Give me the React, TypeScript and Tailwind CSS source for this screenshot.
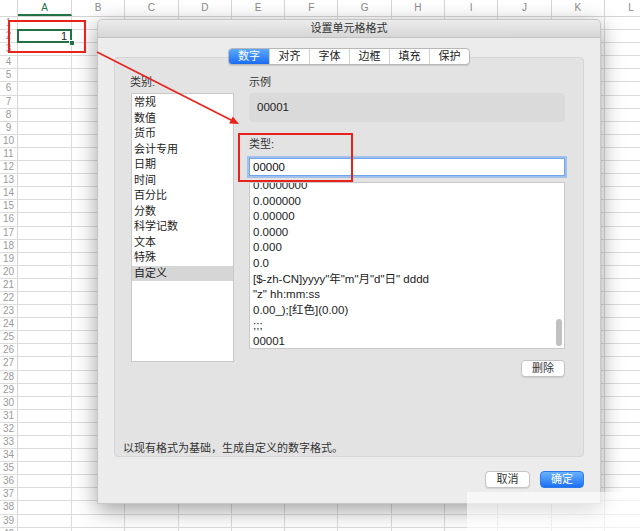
import React from 'react';

const cols = ['A', 'B', 'C', 'D', 'E', 'F', 'G', 'H', 'I', 'J', 'K', 'L'];
const rows = Array.from({ length: 40 }, (_, i) => i + 1);

const categories = ['常规', '数值', '货币', '会计专用', '日期', '时间', '百分比', '分数', '科学记数', '文本', '特殊', '自定义'];
const formats = [
  '0.0000000',
  '0.000000',
  '0.00000',
  '0.0000',
  '0.000',
  '0.0',
  '[$-zh-CN]yyyy"年"m"月"d"日" dddd',
  '"z" hh:mm:ss',
  '0.00_);[红色](0.00)',
  ';;;',
  '00001',
];
const tabs = ['数字', '对齐', '字体', '边框', '填充', '保护'];

function Sheet() {
  return (
    <div className="flex flex-col">
      {/* column header */}
      <div className="flex h-[17px] border-b border-[#d6d6d6] bg-white">
        <div className="w-[18px] shrink-0 border-r border-[#d6d6d6]" />
        {cols.map((c) => (
          <div
            key={c}
            className={
              c === 'A'
                ? 'w-[54px] shrink-0 border-r border-[#d6d6d6] border-b-2 border-b-[#217346] text-center text-[10px] leading-[16px] text-[#217346]'
                : 'w-[53.3px] shrink-0 border-r border-[#d6d6d6] text-center text-[10px] leading-[16px] text-[#8a8a8a]'
            }
          >
            {c}
          </div>
        ))}
      </div>
      {rows.map((r) => (
        <div key={r} className="flex h-[13.1px] border-b border-[#dcdcdc]">
          <div className="w-[18px] shrink-0 border-r border-[#d6d6d6] text-center text-[10px] leading-[12px] text-[#9a9a9a]">{r}</div>
          {cols.map((c) =>
            c === 'A' && r === 2 ? (
              <div key={c} className="relative w-[54px] shrink-0 border-r border-[#dcdcdc] text-right text-[11px] leading-[12px] pr-[4px]">
                <div className="absolute -inset-[1px] border-2 border-[#217346]" />
                <div className="absolute right-[-4px] bottom-[-4px] w-[6px] h-[6px] bg-[#217346] border border-white" />
                1
              </div>
            ) : (
              <div
                key={c}
                className={c === 'A' ? 'w-[54px] shrink-0 border-r border-[#dcdcdc]' : 'w-[53.3px] shrink-0 border-r border-[#dcdcdc]'}
              />
            )
          )}
        </div>
      ))}
    </div>
  );
}

function FormatDialog() {
  return (
    <div className="absolute left-[97px] top-[19px] w-[504px] h-[485px] flex flex-col bg-[#ececec] border border-[#c6c6c6] rounded-t-[5px] shadow-[0_6px_22px_rgba(0,0,0,0.38)]">
      {/* title bar */}
      <div className="h-[18px] rounded-t-[5px] bg-gradient-to-b from-[#ececec] to-[#d6d6d6] border-b border-[#c2c2c2] text-center text-[11px] leading-[17px] text-[#333]">
        设置单元格格式
      </div>

      {/* tabs */}
      <div className="relative z-10 mt-[10px] flex justify-center">
        <div className="flex rounded-[4px] border border-[#b8b8b8] bg-white shadow-[0_1px_1px_rgba(0,0,0,0.12)] overflow-hidden">
          {tabs.map((t, i) => (
            <div
              key={t}
              className={
                i === 0
                  ? 'w-[40px] h-[15px] text-center text-[11px] leading-[15px] text-white bg-gradient-to-b from-[#5ba8fd] to-[#1a6cf1]'
                  : 'w-[40px] h-[15px] text-center text-[11px] leading-[15px] text-[#222] border-l border-[#d2d2d2]'
              }
            >
              {t}
            </div>
          ))}
        </div>
      </div>

      {/* panel */}
      <div className="mx-[16px] mt-[-8px] h-[400px] flex flex-col bg-[#e3e3e3] border border-[#d5d5d5] rounded-[4px]">
        <div className="flex gap-[15px] pl-[16px] pt-[16px]">
          {/* category */}
          <div className="w-[103px] flex flex-col">
            <div className="h-[16px] text-[11px] leading-[16px] text-[#333] -ml-[1px]">类别:</div>
            <div className="mt-[3px] h-[269px] bg-white border border-[#c9c9c9] pt-[1px]">
              {categories.map((c) => (
                <div
                  key={c}
                  className={
                    c === '自定义'
                      ? 'h-[15.5px] pl-[2px] text-[11px] leading-[15.5px] text-[#222] bg-[#d6d6d6]'
                      : 'h-[15.5px] pl-[2px] text-[11px] leading-[15.5px] text-[#222]'
                  }
                >
                  {c}
                </div>
              ))}
            </div>
          </div>

          {/* sample / type */}
          <div className="w-[316px] flex flex-col">
            <div className="h-[16px] text-[11px] leading-[16px] text-[#333]">示例</div>
            <div className="mt-[3px] h-[29px] rounded-[4px] bg-[#dadada] pl-[8px] text-[11.5px] leading-[29px] text-[#222]">00001</div>
            <div className="mt-[14px] h-[16px] text-[11px] leading-[16px] text-[#333]">类型:</div>
            <div className="mt-[6px] h-[18px] bg-white border border-[#6fa5ee] shadow-[0_0_0_2px_rgba(110,165,240,0.55)] pl-[3px] text-[11.5px] leading-[16px] text-[#111]">
              00000
            </div>
            <div className="relative mt-[6px] h-[167px] bg-white border border-[#c9c9c9] overflow-hidden">
              <div className="-mt-[5px] pl-[3px]">
                {formats.map((f) => (
                  <div key={f} className="h-[15.6px] text-[11.5px] leading-[15.6px] text-[#222] whitespace-nowrap">
                    {f}
                  </div>
                ))}
              </div>
              <div className="absolute right-[2px] top-[136px] w-[6px] h-[27px] rounded-full bg-[#c1c1c1]" />
            </div>
            <div className="mt-[11px] self-end w-[44px] h-[17px] rounded-[4px] bg-white border border-[#c4c4c4] shadow-[0_1px_1px_rgba(0,0,0,0.1)] text-center text-[11px] leading-[15px] text-[#333]">
              删除
            </div>
          </div>
        </div>
        <div className="flex-1" />
        <div className="pl-[8px] pb-[1px] h-[16px] text-[11px] leading-[16px] text-[#333]">以现有格式为基础，生成自定义的数字格式。</div>
      </div>

      {/* footer buttons */}
      <div className="mt-[14px] flex justify-end gap-[10px] pr-[16px]">
        <div className="w-[45px] h-[17px] rounded-[4px] bg-white border border-[#c4c4c4] shadow-[0_1px_1px_rgba(0,0,0,0.1)] text-center text-[11px] leading-[15px] text-[#333]">
          取消
        </div>
        <div className="w-[44px] h-[17px] rounded-[4px] bg-gradient-to-b from-[#69b1fc] to-[#1b70f1] border border-[#2f7ae8] text-center text-[11px] leading-[15px] text-white">
          确定
        </div>
      </div>
    </div>
  );
}

function Marks() {
  return (
    <svg className="absolute inset-0 pointer-events-none" width="640" height="531" viewBox="0 0 640 531">
      <rect x="9" y="21" width="76" height="31" fill="none" stroke="#e8231b" strokeWidth="2" />
      <rect x="239" y="134" width="113" height="47" fill="none" stroke="#e8231b" strokeWidth="2" />
      <line x1="97" y1="52" x2="232" y2="120.5" stroke="#e8231b" strokeWidth="1.6" />
      <polygon points="239,124 229.2,123.6 232.8,116.4" fill="#e8231b" />
    </svg>
  );
}

export default function App() {
  return (
    <div className="relative w-[640px] h-[531px] overflow-hidden bg-white font-['Liberation_Sans','Noto_Sans_CJK_SC',sans-serif] text-[#222]">
      <Sheet />
      <FormatDialog />
      <Marks />
      {/* faded corner */}
      <div className="absolute left-[467px] top-[492px] right-0 bottom-0 bg-white/60" />
    </div>
  );
}
